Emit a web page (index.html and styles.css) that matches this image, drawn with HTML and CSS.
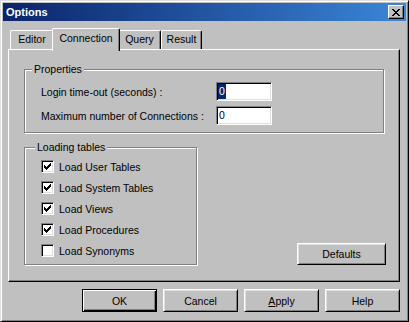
FILE: index.html
```html
<!DOCTYPE html>
<html lang="en">
<head>
  <meta charset="UTF-8">
  <title>Options</title>
  <link rel="stylesheet" href="styles.css">
</head>
<body>
  <div class="window">
    <div class="titlebar">
      <span class="title">Options</span>
      <button class="close" aria-label="Close">
        <svg width="8" height="7" viewBox="0 0 8 7" shape-rendering="crispEdges">
          <path fill="#000" d="M0 0h2v1h-2z M6 0h2v1h-2z M1 1h2v1h-2z M5 1h2v1h-2z M2 2h4v1h-4z M3 3h2v1h-2z M2 4h4v1h-4z M1 5h2v1h-2z M5 5h2v1h-2z M0 6h2v1h-2z M6 6h2v1h-2z"/>
        </svg>
      </button>
    </div>

    <div class="content">
      <div class="tabs">
        <div class="tab tab-editor">Editor</div>
        <div class="tab tab-connection active">Connection</div>
        <div class="tab tab-query">Query</div>
        <div class="tab tab-result">Result</div>
      </div>

      <div class="panel">
        <fieldset class="group group-props">
          <legend>Properties</legend>
          <div class="field-grid">
            <label>Login time-out (seconds) :</label>
            <div class="field"><span class="sel">0</span></div>
            <label>Maximum number of Connections :</label>
            <div class="field"><span>0</span></div>
          </div>
        </fieldset>

        <div class="bottom-row">
          <fieldset class="group group-loading">
            <legend>Loading tables</legend>
            <div class="check-row"><span class="check checked"><svg width="7" height="7" viewBox="0 0 7 7" shape-rendering="crispEdges"><path fill="#000" d="M6 0h1v1h-1z M5 1h2v1h-2z M0 2h1v1h-1z M4 2h3v1h-3z M0 3h2v1h-2z M3 3h3v1h-3z M0 4h5v1h-5z M1 5h3v1h-3z M2 6h1v1h-1z"/></svg></span>Load User Tables</div>
            <div class="check-row"><span class="check checked"><svg width="7" height="7" viewBox="0 0 7 7" shape-rendering="crispEdges"><path fill="#000" d="M6 0h1v1h-1z M5 1h2v1h-2z M0 2h1v1h-1z M4 2h3v1h-3z M0 3h2v1h-2z M3 3h3v1h-3z M0 4h5v1h-5z M1 5h3v1h-3z M2 6h1v1h-1z"/></svg></span>Load System Tables</div>
            <div class="check-row"><span class="check checked"><svg width="7" height="7" viewBox="0 0 7 7" shape-rendering="crispEdges"><path fill="#000" d="M6 0h1v1h-1z M5 1h2v1h-2z M0 2h1v1h-1z M4 2h3v1h-3z M0 3h2v1h-2z M3 3h3v1h-3z M0 4h5v1h-5z M1 5h3v1h-3z M2 6h1v1h-1z"/></svg></span>Load Views</div>
            <div class="check-row"><span class="check checked"><svg width="7" height="7" viewBox="0 0 7 7" shape-rendering="crispEdges"><path fill="#000" d="M6 0h1v1h-1z M5 1h2v1h-2z M0 2h1v1h-1z M4 2h3v1h-3z M0 3h2v1h-2z M3 3h3v1h-3z M0 4h5v1h-5z M1 5h3v1h-3z M2 6h1v1h-1z"/></svg></span>Load Procedures</div>
            <div class="check-row"><span class="check"></span>Load Synonyms</div>
          </fieldset>
          <button class="btn btn-defaults">Defaults</button>
        </div>
      </div>

      <div class="actions">
        <button class="btn btn-default">OK</button>
        <button class="btn">Cancel</button>
        <button class="btn"><u>A</u>pply</button>
        <button class="btn">Help</button>
      </div>
    </div>
  </div>
</body>
</html>
```

FILE: styles.css
```css
:root {
  --face: #c0c0c0;
  --light: #dfdfdf;
  --shadow: #808080;
  --dark: #000;
  --title-start: #0a246a;
  --title-end: #3b86d8;
}
* { box-sizing: border-box; }
body {
  margin: 0;
  font-family: "Liberation Sans", Arial, sans-serif;
  font-size: 10.5px;
  color: #000;
  background: var(--face);
}
.window {
  width: 409px;
  height: 322px;
  padding: 2px;
  background: var(--face);
  border: 1px solid;
  border-color: var(--light) var(--dark) var(--dark) var(--light);
  box-shadow: inset 1px 1px #fff, inset -1px -1px var(--shadow);
}
.titlebar {
  height: 18px;
  display: flex;
  align-items: center;
  justify-content: space-between;
  padding-left: 3px;
  background: linear-gradient(to right, var(--title-start), var(--title-end));
}
.title {
  color: #fff;
  font-weight: bold;
  font-size: 11px;
}
.close {
  width: 16px;
  height: 14px;
  margin-right: 2px;
  padding: 0;
  display: flex;
  align-items: center;
  justify-content: center;
  background: var(--face);
  border: 1px solid;
  border-color: #fff var(--dark) var(--dark) #fff;
  box-shadow: inset -1px -1px var(--shadow);
}
.content {
  padding: 7px 6px 7px 5px;
}

/* tabs */
.tabs {
  height: 21px;
  margin-left: 2px;
  display: flex;
  align-items: flex-end;
}
.tab {
  height: 19px;
  padding-top: 2px;
  line-height: 13px;
  text-align: center;
  background: var(--face);
  border-top: 1px solid #fff;
  border-left: 1px solid #fff;
  border-right: 1px solid var(--dark);
  box-shadow: inset -1px 0 var(--shadow);
  border-radius: 2px 2px 0 0;
}
.tab-editor { width: 44px; }
.tab-connection { width: 64px; }
.tab-query { width: 43px; }
.tab-result { width: 41px; }
.tab.active {
  width: 68px;
  height: 23px;
  margin: 0 -2px -2px;
  padding-top: 3px;
  position: relative;
  z-index: 1;
}

/* panel */
.panel {
  height: 233px;
  padding: 13px 15px 0;
  border: 1px solid;
  border-color: #fff var(--dark) var(--dark) #fff;
  box-shadow: inset -1px -1px var(--shadow);
}
.group {
  margin: 0;
  min-width: 0;
  padding-left: 7px;
  border: 1px solid var(--shadow);
  box-shadow: inset 1px 1px #fff, 1px 1px #fff;
}
.group legend {
  padding: 0 2px;
  line-height: 13px;
  background: var(--face);
}
.group-props {
  padding-top: 6px;
  padding-bottom: 7px;
}
.field-grid {
  margin-left: 9px;
  display: grid;
  grid-template-columns: 175px 56px;
  grid-auto-rows: 19px;
  row-gap: 5px;
  align-items: center;
}
.field {
  height: 19px;
  padding-left: 1px;
  display: flex;
  align-items: center;
  background: #fff;
  border: 1px solid;
  border-color: var(--shadow) #fff #fff var(--shadow);
  box-shadow: inset 1px 1px var(--dark), inset -1px -1px var(--light);
}
.field span {
  padding: 0 1px;
  line-height: 15px;
}
.field .sel {
  background: var(--title-start);
  color: #fff;
}
.bottom-row {
  margin-top: 8px;
  display: flex;
  align-items: flex-end;
  justify-content: space-between;
}
.group-loading {
  width: 173px;
  padding-top: 2px;
  padding-bottom: 3px;
}
.group-loading legend {
  margin-left: 3px;
}
.check-row {
  margin-left: 9px;
  height: 21px;
  display: flex;
  align-items: center;
  gap: 5px;
}
.check {
  width: 13px;
  height: 13px;
  display: flex;
  align-items: center;
  justify-content: center;
  background: #fff;
  border: 1px solid;
  border-color: var(--shadow) #fff #fff var(--shadow);
  box-shadow: inset 1px 1px var(--dark), inset -1px -1px var(--light);
}

/* buttons */
.btn {
  width: 75px;
  height: 23px;
  padding: 0;
  font: inherit;
  color: #000;
  background: var(--face);
  border: 1px solid;
  border-color: #fff var(--dark) var(--dark) #fff;
  box-shadow: inset 1px 1px var(--light), inset -1px -1px var(--shadow);
}
.btn-default {
  border-color: var(--dark);
  box-shadow: inset 1px 1px #fff, inset -1px -1px var(--dark), inset -2px -2px var(--shadow);
}
.btn-defaults {
  width: 89px;
  height: 22px;
  margin-right: -2px;
}
.actions {
  margin-top: 7px;
  display: flex;
  justify-content: flex-end;
  gap: 6px;
}
```
